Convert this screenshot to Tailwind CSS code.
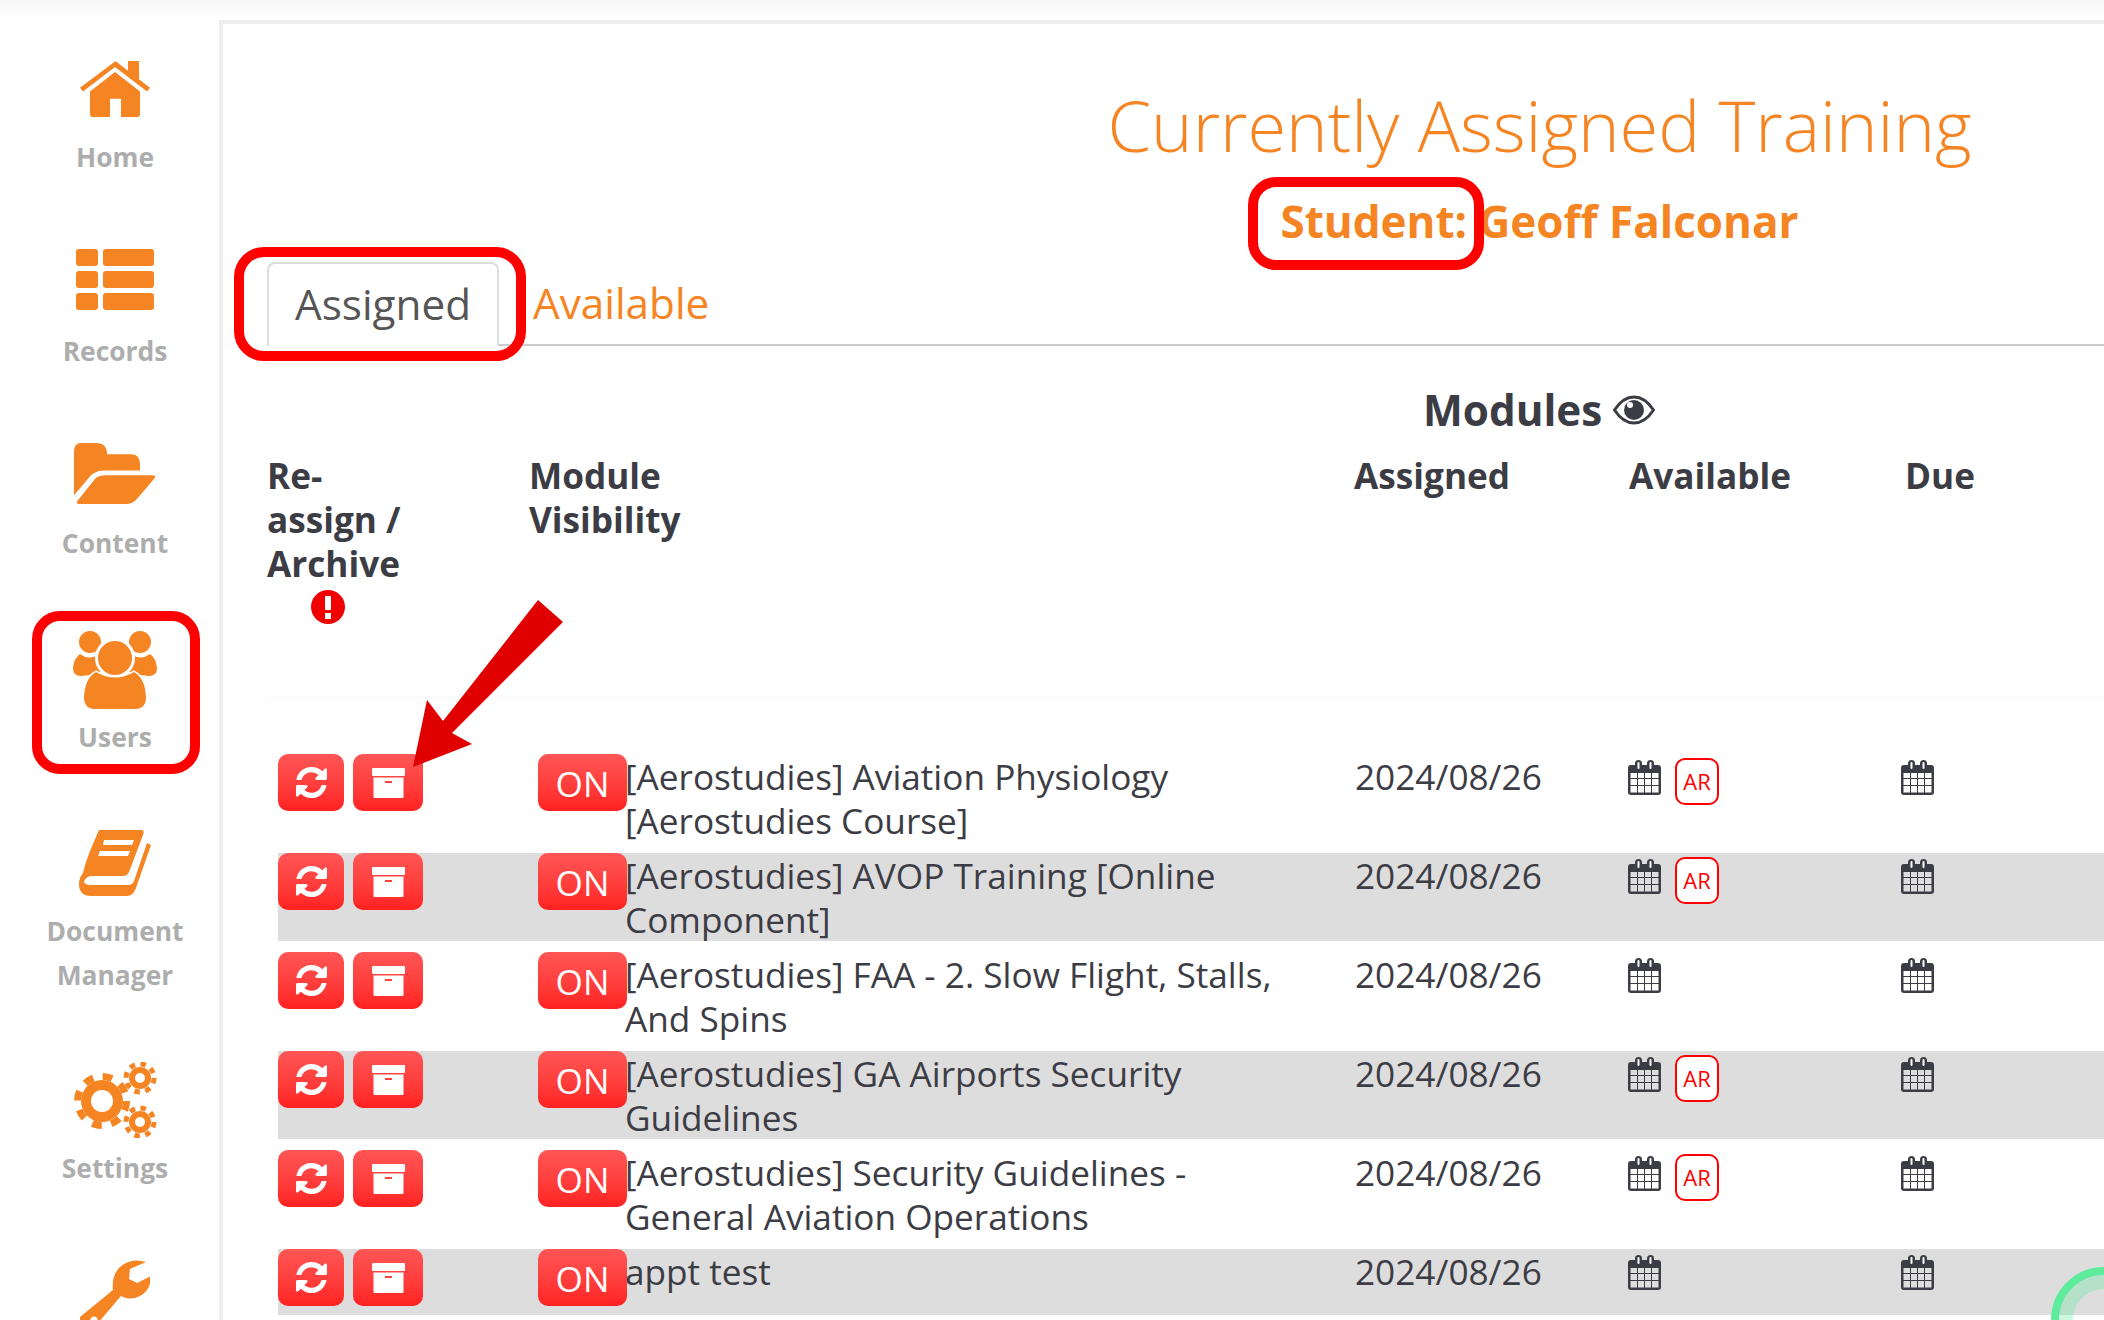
<!DOCTYPE html>
<html lang="en">

<head>
  <meta charset="UTF-8">
  <title>Currently Assigned Training</title>
  <script src="https://cdn.jsdelivr.net/npm/@tailwindcss/browser@4"></script>
</head>

<body class="relative w-[2104px] h-[1320px] overflow-hidden bg-white font-['Open_Sans',sans-serif] text-[#3c3c44]">

  <!-- Shared icons -->
  <svg class="hidden">
    <symbol id="i-refresh" viewBox="0 0 1536 1536"><path d="M1511 928q0 5-1 7-64 268-268 434.5t-478 166.5q-146 0-282.5-55t-243.5-157l-129 129q-19 19-45 19t-45-19-19-45v-448q0-26 19-45t45-19h448q26 0 45 19t19 45-19 45l-137 137q71 66 161 102t187 36q134 0 250-65t186-179q11-17 53-117 8-23 30-23h192q13 0 22.5 9.500t9.500 22.500zm25-800v448q0 26-19 45t-45 19h-448q-26 0-45-19t-19-45 19-45l138-138q-148-137-349-137-134 0-250 65t-186 179q-11 17-53 117-8 23-30 23h-199q-13 0-22.5-9.500t-9.500-22.500v-7q65-268 270-434.500t480-166.500q146 0 284 55.500t245 156.500l130-129q19-19 45-19t45 19 19 45z"/></symbol>
    <symbol id="i-archive" viewBox="0 0 33 30"><rect width="33" height="8" rx="1"/><path fill-rule="evenodd" d="M1.500 9.500 H31.500 V29 Q31.500 30 30.500 30 H2.500 Q1.500 30 1.500 29 Z M13 13 V15 H20 V13 Z"/></symbol>
    <symbol id="i-cal" viewBox="0 0 33 35"><path fill-rule="evenodd" d="M3 5 H30 Q33 5 33 8 V32 Q33 35 30 35 H3 Q0 35 0 32 V8 Q0 5 3 5 Z M2.500 13 V18 H9 V13 Z M10 13 V18 H16 V13 Z M17 13 V18 H23 V13 Z M24 13 V18 H30.500 V13 Z M2.500 19 V25 H9 V19 Z M10 19 V25 H16 V19 Z M17 19 V25 H23 V19 Z M24 19 V25 H30.500 V19 Z M2.500 26 V32.500 H9 V26 Z M10 26 V32.500 H16 V26 Z M17 26 V32.500 H23 V26 Z M24 26 V32.500 H30.500 V26 Z"/><rect x="7" y="0" width="7" height="11" rx="3.500"/><rect x="19" y="0" width="7" height="11" rx="3.500"/><rect x="9.500" y="2" width="2" height="7" rx="1" fill="#fff"/><rect x="21.500" y="2" width="2" height="7" rx="1" fill="#fff"/></symbol>
  </svg>

  <div class="h-[20px] bg-gradient-to-b from-[#f7f7f7] to-white"></div>

  <div class="flex h-[1300px]">
    <!-- Sidebar -->
    <nav class="w-[219px] shrink-0 pl-[11px] text-[#adadad] font-bold text-[26.4px] leading-[44px] text-center">
      <a class="h-[229px] pt-[41px] flex flex-col items-center">
        <svg class="w-[70px] h-[56px] mb-[18px]" viewBox="0 0 70 46" preserveAspectRatio="none" fill="#f58423"><path d="M0 22 L34 1 Q35 0 37 1 L48 8 V0 H59 V15 L70 22 L67 25 L35 5 L3 25 Z"/><path d="M35 9 L60 25 V44 Q60 46 58 46 H41 V31 H30 V46 H12 Q10 46 10 44 V25 Z"/></svg>
        <span>Home</span>
      </a>
      <a class="h-[194px] flex flex-col items-center">
        <svg class="w-[78px] h-[61px] mb-[19px]" viewBox="0 0 78 61" fill="#f58423"><rect width="22" height="17" rx="3"/><rect x="27" width="51" height="17" rx="3"/><rect y="22" width="22" height="17" rx="3"/><rect x="27" y="22" width="51" height="17" rx="3"/><rect y="44" width="22" height="17" rx="3"/><rect x="27" y="44" width="51" height="17" rx="3"/></svg>
        <span>Records</span>
      </a>
      <a class="h-[188px] flex flex-col items-center">
        <svg class="w-[82px] h-[61px] mb-[17px]" viewBox="0 0 82 49" preserveAspectRatio="none" fill="#f58423"><path d="M0 42 V7 Q0 0 7 0 H22 Q33 0 33 9 H57 Q66 9 66 17 V22 H30 Q22 22 17 26 Z"/><path d="M3 47 L22 28 Q26 26 32 26 H78 Q82 26 81 28 L64 44 Q59 49 53 49 H5 Q2 49 3 47 Z"/></svg>
        <span>Content</span>
      </a>
      <a class="h-[199px] flex flex-col items-center">
        <svg class="w-[84px] h-[78px] mb-[6px]" viewBox="0 0 84 78" fill="#f58423">
          <path d="M7 23 Q16 30 26 23 L34 36 Q26 44 8 45 Q0 45 0 37 Q1 27 7 23 Z"/>
          <path d="M77 23 Q68 30 58 23 L50 36 Q58 44 76 45 Q84 45 84 37 Q83 27 77 23 Z"/>
          <circle cx="17" cy="11" r="11"/><circle cx="67" cy="11" r="11"/>
          <circle cx="42" cy="27" r="18.500" stroke="#fff" stroke-width="3"/>
          <path d="M11 66 Q12 47 23 41 Q42 52 61 41 Q72 47 73 66 Q73 78 62 78 H22 Q11 78 11 66 Z" stroke="#fff" stroke-width="3" paint-order="stroke"/>
        </svg>
        <span>Users</span>
      </a>
      <a class="h-[232px] flex flex-col items-center">
        <svg class="w-[72px] h-[66px] mb-[13px]" viewBox="0 0 72 66" fill="#f58423"><path d="M20 0 H62 Q66 0 64 5 L50 42 Q48 46 44 46 H12 Q6 47 5 52 Q6 55 12 55 H50 Q54 54 55 51 L68 13 L72 15 L57 58 Q54 66 48 66 H12 Q0 66 0 54 Q0 48 4 43 Q8 27 14 14 Z"/><path d="M25 10 H55 L53 15 H24 Z M21 21 H51 L49 26 H19 Z" fill="#fff"/></svg>
        <span>Document<br>Manager</span>
      </a>
      <a class="h-[198px] flex flex-col items-center">
        <svg class="w-[83px] h-[76px] mb-[8px]" viewBox="0 0 83 76" fill="#f58423">
          <circle cx="28" cy="39" r="21"/><circle cx="28" cy="39" r="24.500" fill="none" stroke="#f58423" stroke-width="7" stroke-dasharray="9.620 9.620"/><circle cx="28" cy="39" r="11" fill="#fff"/>
          <circle cx="66" cy="16" r="11"/><circle cx="66" cy="16" r="14" fill="none" stroke="#f58423" stroke-width="5" stroke-dasharray="5.500 5.500"/><circle cx="66" cy="16" r="5" fill="#fff"/>
          <circle cx="66" cy="60" r="11"/><circle cx="66" cy="60" r="14" fill="none" stroke="#f58423" stroke-width="5" stroke-dasharray="5.500 5.500"/><circle cx="66" cy="60" r="5" fill="#fff"/>
        </svg>
        <span>Settings</span>
      </a>
      <a class="flex flex-col items-center">
        <svg class="w-[70px] h-[70px]" viewBox="0 0 70 70" fill="#f58423"><path d="M0 57 L33 30 Q31 12 44 4 Q54 -2 66 2 L50 9 L49 19 L57 23 L71 16 Q71 30 60 36 Q50 41 41 36 L12 70 Q0 76 -2 64 Q-2 60 0 57 Z"/><circle cx="14" cy="60" r="3.500" fill="#fff"/></svg>
      </a>
    </nav>

    <!-- Main panel -->
    <main class="flex-1 border-l-[4px] border-t-[4px] border-[#eeeeee] pl-[44px]">
      <div class="pt-[56px] ml-[708px]">
        <h1 class="text-center text-[70.4px] leading-[90px] font-light text-[#f58423] whitespace-nowrap">Currently Assigned Training</h1>
        <p class="mt-[21px] text-center text-[44px] leading-[60px] font-bold text-[#f58423] whitespace-nowrap">Student: Geoff Falconar</p>
      </div>

      <!-- Tabs -->
      <div class="flex mt-[11px] border-b-[2px] border-[#cccccc] h-[84px]">
        <div class="w-[232px] h-[84px] pb-[3px] flex items-center justify-center bg-white border-[2px] border-b-0 border-[#dddddd] rounded-t-[8px] text-[42.24px] text-[#555555]">Assigned</div>
        <div class="h-[84px] pb-[3px] pl-[34px] flex items-center text-[42.24px] text-[#f58423]">Available</div>
      </div>

      <!-- Table header -->
      <div class="mt-[21px] grid grid-cols-[262px_825px_275px_276px_1fr] text-[35.2px] leading-[44px] font-bold">
        <div class="col-start-3 col-span-3 h-[86px] flex items-center pl-[69px] text-[42.24px]">
          <span>Modules</span>
          <svg class="ml-[11px] w-[42px] h-[30px]" viewBox="0 0 42 30"><path d="M1.500 15 Q10 2 21 2 Q32 2 40.500 15 Q32 28 21 28 Q10 28 1.500 15 Z" fill="none" stroke="#3c3c44" stroke-width="3"/><circle cx="21" cy="15" r="10" fill="#3c3c44"/><circle cx="17" cy="10" r="3" fill="#fff"/></svg>
        </div>
        <div class="col-start-1 row-start-2 pr-[120px] h-[244px]">Re-assign&nbsp;/ Archive
          <svg class="ml-[44px] mt-[5px] w-[34px] h-[34px]" viewBox="0 0 34 34"><circle cx="17" cy="17" r="17" fill="#f00000"/><rect x="14" y="6" width="6" height="14" rx="1" fill="#fff"/><rect x="14" y="23" width="6" height="6" fill="#fff"/></svg>
        </div>
        <div class="col-start-2 row-start-2">Module<br>Visibility</div>
        <div class="col-start-3 row-start-2">Assigned</div>
        <div class="col-start-4 row-start-2">Available</div>
        <div class="col-start-5 row-start-2">Due</div>
      </div>
      <div class="h-[1px] bg-[#f8f8f8] mb-[56px]"></div>

      <!-- Rows -->
      <div class="ml-[11px] flex flex-col gap-[11px] text-[35.2px] leading-[44px]">

        <div class="h-[88px] grid grid-cols-[260px_87px_730px_273px_273px_1fr]">
          <div class="flex gap-[9px]">
            <span class="w-[66px] h-[57px] rounded-[10px] bg-gradient-to-b from-[#ff5555] to-[#ff2020] flex items-center justify-center"><svg class="w-[31px] h-[31px] fill-white"><use href="#i-refresh"/></svg></span>
            <span class="w-[70px] h-[57px] rounded-[10px] bg-gradient-to-b from-[#ff5555] to-[#ff2020] flex items-center justify-center"><svg class="w-[33px] h-[30px] fill-white"><use href="#i-archive"/></svg></span>
          </div>
          <div><span class="w-[89px] h-[57px] rounded-[10px] bg-gradient-to-b from-[#ff5555] to-[#ff2020] text-white flex items-center justify-center">ON</span></div>
          <div class="relative pr-[70px]">[Aerostudies] Aviation Physiology [Aerostudies Course]</div>
          <div>2024/08/26</div>
          <div class="flex items-start gap-[14px] pt-[4px]"><svg class="w-[33px] h-[35px] mt-[2px] fill-[#3c3c44]"><use href="#i-cal"/></svg><span class="w-[44px] h-[47px] pb-[2px] rounded-[10px] border-[2px] border-[#ff0000] bg-white text-[#ff0000] text-[22px] flex items-center justify-center">AR</span></div>
          <div class="pt-[6px]"><svg class="w-[33px] h-[35px] fill-[#3c3c44]"><use href="#i-cal"/></svg></div>
        </div>

        <div class="h-[88px] bg-[#dddddd] grid grid-cols-[260px_87px_730px_273px_273px_1fr]">
          <div class="flex gap-[9px]">
            <span class="w-[66px] h-[57px] rounded-[10px] bg-gradient-to-b from-[#ff5555] to-[#ff2020] flex items-center justify-center"><svg class="w-[31px] h-[31px] fill-white"><use href="#i-refresh"/></svg></span>
            <span class="w-[70px] h-[57px] rounded-[10px] bg-gradient-to-b from-[#ff5555] to-[#ff2020] flex items-center justify-center"><svg class="w-[33px] h-[30px] fill-white"><use href="#i-archive"/></svg></span>
          </div>
          <div><span class="w-[89px] h-[57px] rounded-[10px] bg-gradient-to-b from-[#ff5555] to-[#ff2020] text-white flex items-center justify-center">ON</span></div>
          <div class="relative pr-[70px]">[Aerostudies] AVOP Training [Online Component]</div>
          <div>2024/08/26</div>
          <div class="flex items-start gap-[14px] pt-[4px]"><svg class="w-[33px] h-[35px] mt-[2px] fill-[#3c3c44]"><use href="#i-cal"/></svg><span class="w-[44px] h-[47px] pb-[2px] rounded-[10px] border-[2px] border-[#ff0000] bg-white text-[#ff0000] text-[22px] flex items-center justify-center">AR</span></div>
          <div class="pt-[6px]"><svg class="w-[33px] h-[35px] fill-[#3c3c44]"><use href="#i-cal"/></svg></div>
        </div>

        <div class="h-[88px] grid grid-cols-[260px_87px_730px_273px_273px_1fr]">
          <div class="flex gap-[9px]">
            <span class="w-[66px] h-[57px] rounded-[10px] bg-gradient-to-b from-[#ff5555] to-[#ff2020] flex items-center justify-center"><svg class="w-[31px] h-[31px] fill-white"><use href="#i-refresh"/></svg></span>
            <span class="w-[70px] h-[57px] rounded-[10px] bg-gradient-to-b from-[#ff5555] to-[#ff2020] flex items-center justify-center"><svg class="w-[33px] h-[30px] fill-white"><use href="#i-archive"/></svg></span>
          </div>
          <div><span class="w-[89px] h-[57px] rounded-[10px] bg-gradient-to-b from-[#ff5555] to-[#ff2020] text-white flex items-center justify-center">ON</span></div>
          <div class="relative pr-[70px]">[Aerostudies] FAA - 2. Slow Flight, Stalls, And Spins</div>
          <div>2024/08/26</div>
          <div class="pt-[6px]"><svg class="w-[33px] h-[35px] fill-[#3c3c44]"><use href="#i-cal"/></svg></div>
          <div class="pt-[6px]"><svg class="w-[33px] h-[35px] fill-[#3c3c44]"><use href="#i-cal"/></svg></div>
        </div>

        <div class="h-[88px] bg-[#dddddd] grid grid-cols-[260px_87px_730px_273px_273px_1fr]">
          <div class="flex gap-[9px]">
            <span class="w-[66px] h-[57px] rounded-[10px] bg-gradient-to-b from-[#ff5555] to-[#ff2020] flex items-center justify-center"><svg class="w-[31px] h-[31px] fill-white"><use href="#i-refresh"/></svg></span>
            <span class="w-[70px] h-[57px] rounded-[10px] bg-gradient-to-b from-[#ff5555] to-[#ff2020] flex items-center justify-center"><svg class="w-[33px] h-[30px] fill-white"><use href="#i-archive"/></svg></span>
          </div>
          <div><span class="w-[89px] h-[57px] rounded-[10px] bg-gradient-to-b from-[#ff5555] to-[#ff2020] text-white flex items-center justify-center">ON</span></div>
          <div class="relative pr-[70px]">[Aerostudies] GA Airports Security Guidelines</div>
          <div>2024/08/26</div>
          <div class="flex items-start gap-[14px] pt-[4px]"><svg class="w-[33px] h-[35px] mt-[2px] fill-[#3c3c44]"><use href="#i-cal"/></svg><span class="w-[44px] h-[47px] pb-[2px] rounded-[10px] border-[2px] border-[#ff0000] bg-white text-[#ff0000] text-[22px] flex items-center justify-center">AR</span></div>
          <div class="pt-[6px]"><svg class="w-[33px] h-[35px] fill-[#3c3c44]"><use href="#i-cal"/></svg></div>
        </div>

        <div class="h-[88px] grid grid-cols-[260px_87px_730px_273px_273px_1fr]">
          <div class="flex gap-[9px]">
            <span class="w-[66px] h-[57px] rounded-[10px] bg-gradient-to-b from-[#ff5555] to-[#ff2020] flex items-center justify-center"><svg class="w-[31px] h-[31px] fill-white"><use href="#i-refresh"/></svg></span>
            <span class="w-[70px] h-[57px] rounded-[10px] bg-gradient-to-b from-[#ff5555] to-[#ff2020] flex items-center justify-center"><svg class="w-[33px] h-[30px] fill-white"><use href="#i-archive"/></svg></span>
          </div>
          <div><span class="w-[89px] h-[57px] rounded-[10px] bg-gradient-to-b from-[#ff5555] to-[#ff2020] text-white flex items-center justify-center">ON</span></div>
          <div class="relative pr-[70px]">[Aerostudies] Security Guidelines - General Aviation Operations</div>
          <div>2024/08/26</div>
          <div class="flex items-start gap-[14px] pt-[4px]"><svg class="w-[33px] h-[35px] mt-[2px] fill-[#3c3c44]"><use href="#i-cal"/></svg><span class="w-[44px] h-[47px] pb-[2px] rounded-[10px] border-[2px] border-[#ff0000] bg-white text-[#ff0000] text-[22px] flex items-center justify-center">AR</span></div>
          <div class="pt-[6px]"><svg class="w-[33px] h-[35px] fill-[#3c3c44]"><use href="#i-cal"/></svg></div>
        </div>

        <div class="h-[66px] bg-[#dddddd] grid grid-cols-[260px_87px_730px_273px_273px_1fr]">
          <div class="flex gap-[9px]">
            <span class="w-[66px] h-[57px] rounded-[10px] bg-gradient-to-b from-[#ff5555] to-[#ff2020] flex items-center justify-center"><svg class="w-[31px] h-[31px] fill-white"><use href="#i-refresh"/></svg></span>
            <span class="w-[70px] h-[57px] rounded-[10px] bg-gradient-to-b from-[#ff5555] to-[#ff2020] flex items-center justify-center"><svg class="w-[33px] h-[30px] fill-white"><use href="#i-archive"/></svg></span>
          </div>
          <div><span class="w-[89px] h-[57px] rounded-[10px] bg-gradient-to-b from-[#ff5555] to-[#ff2020] text-white flex items-center justify-center">ON</span></div>
          <div class="relative pr-[70px]">appt test</div>
          <div>2024/08/26</div>
          <div class="pt-[6px]"><svg class="w-[33px] h-[35px] fill-[#3c3c44]"><use href="#i-cal"/></svg></div>
          <div class="pt-[6px]"><svg class="w-[33px] h-[35px] fill-[#3c3c44]"><use href="#i-cal"/></svg></div>
        </div>

      </div>
    </main>
  </div>

  <!-- Red annotations drawn over the screenshot -->
  <div class="absolute left-[32px] top-[611px] w-[168px] h-[163px] rounded-[28px] border-[10px] border-[#ff0000]"></div>
  <div class="absolute left-[234px] top-[247px] w-[292px] h-[114px] rounded-[30px] border-[10px] border-[#ff0000]"></div>
  <div class="absolute left-[1248px] top-[177px] w-[236px] h-[93px] rounded-[28px] border-[10px] border-[#ff0000]"></div>
  <svg class="absolute left-0 top-0 w-[2104px] h-[1320px] pointer-events-none" viewBox="0 0 2104 1320"><polygon points="538,600 563,622 452,733 472,744 413,767 427,700 443,721" fill="#e00000"/></svg>

  <!-- Help widget -->
  <div class="absolute left-[2051px] top-[1267px] w-[106px] h-[106px] rounded-full border-[8px] border-[#5eeb9c]">
    <div class="w-full h-full rounded-full border-[14px] border-[#5eeb9c]/30"></div>
  </div>
</body>

</html>
